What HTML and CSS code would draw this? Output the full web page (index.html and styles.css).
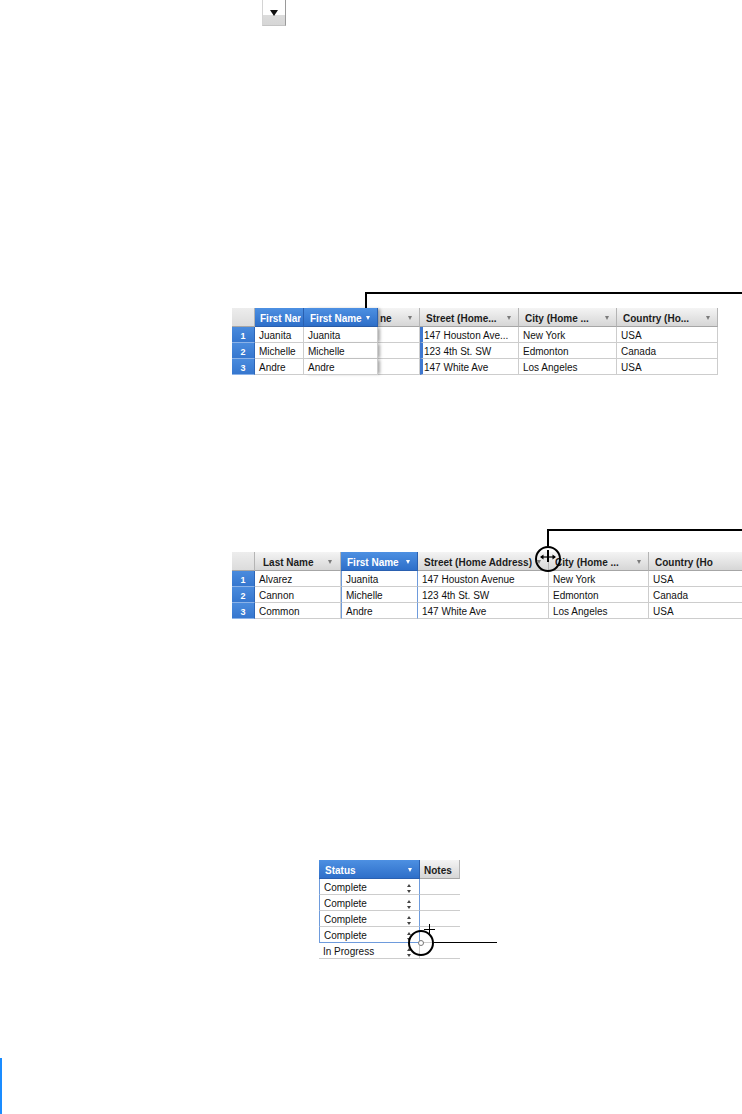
FILE: index.html
```html
<!DOCTYPE html>
<html lang="en">
<head>
    <meta charset="UTF-8">
    <meta name="viewport" content="width=device-width, initial-scale=1.0">
    <title>Reordering and resizing columns</title>
    <link rel="stylesheet" href="styles.css">
</head>
<body>
    <div class="page">
        <!-- Column menu button -->
        <div class="menu-btn"><i></i></div>

        <!-- Moving a column -->
        <div class="fig fig-move">
            <div class="callout callout-move"><span></span></div>
            <div class="sheet t1">
                <div class="h corner"></div>
                <div class="h sel clip"><span>First Nar</span></div>
                <div class="h sel ghost"><span>First Name</span><i class="dd"></i></div>
                <div class="h under"><span>ne</span><i class="dd"></i></div>
                <div class="h"><span>Street (Home...</span><i class="dd"></i></div>
                <div class="h"><span>City (Home ...</span><i class="dd"></i></div>
                <div class="h"><span>Country (Ho...</span><i class="dd"></i></div>

                <div class="c n">1</div>
                <div class="c">Juanita</div>
                <div class="c ghost">Juanita</div>
                <div class="c"></div>
                <div class="c drop">147 Houston Ave...</div>
                <div class="c">New York</div>
                <div class="c">USA</div>

                <div class="c n">2</div>
                <div class="c">Michelle</div>
                <div class="c ghost">Michelle</div>
                <div class="c"></div>
                <div class="c drop">123 4th St. SW</div>
                <div class="c">Edmonton</div>
                <div class="c">Canada</div>

                <div class="c n">3</div>
                <div class="c">Andre</div>
                <div class="c ghost">Andre</div>
                <div class="c"></div>
                <div class="c drop">147 White Ave</div>
                <div class="c">Los Angeles</div>
                <div class="c">USA</div>
            </div>
        </div>

        <!-- Resizing a column -->
        <div class="fig fig-resize">
            <div class="callout callout-resize"><span></span></div>
            <div class="sheet t2">
                <div class="h corner"></div>
                <div class="h wide"><span>Last Name</span><i class="dd"></i></div>
                <div class="h sel"><span>First Name</span><i class="dd"></i></div>
                <div class="h"><span>Street (Home Address)</span><i class="dd"></i></div>
                <div class="h"><span>City (Home ...</span><i class="dd"></i></div>
                <div class="h"><span>Country (Ho</span><i class="dd"></i></div>

                <div class="c n">1</div>
                <div class="c">Alvarez</div>
                <div class="c picked">Juanita</div>
                <div class="c">147 Houston Avenue</div>
                <div class="c">New York</div>
                <div class="c">USA</div>

                <div class="c n">2</div>
                <div class="c">Cannon</div>
                <div class="c picked">Michelle</div>
                <div class="c">123 4th St. SW</div>
                <div class="c">Edmonton</div>
                <div class="c">Canada</div>

                <div class="c n">3</div>
                <div class="c">Common</div>
                <div class="c picked">Andre</div>
                <div class="c">147 White Ave</div>
                <div class="c">Los Angeles</div>
                <div class="c">USA</div>
            </div>
            <div class="lens lens-resize">
                <svg width="26" height="26" viewBox="0 0 26 26">
                    <line x1="13" y1="4" x2="13" y2="16" stroke="#000" stroke-width="2"/>
                    <line x1="6" y1="11" x2="20" y2="11" stroke="#000" stroke-width="1.2"/>
                    <path d="M5 11 L8.5 8.5 L8.5 13.5 Z" fill="#000"/>
                    <path d="M21 11 L17.5 8.5 L17.5 13.5 Z" fill="#000"/>
                </svg>
            </div>
        </div>

        <!-- Filling cells -->
        <div class="fig fig-fill">
            <div class="sheet t3">
                <div class="h sel"><span>Status</span><i class="dd"></i></div>
                <div class="h notes"><span>Notes</span></div>

                <div class="c st picked"><span>Complete</span><i class="step"></i></div>
                <div class="c nt"></div>
                <div class="c st picked"><span>Complete</span><i class="step"></i></div>
                <div class="c nt"></div>
                <div class="c st picked"><span>Complete</span><i class="step"></i></div>
                <div class="c nt"></div>
                <div class="c st picked last"><span>Complete</span><i class="step"></i></div>
                <div class="c nt"></div>
                <div class="c st"><span>In Progress</span><i class="step"></i></div>
                <div class="c nt"></div>
            </div>
            <div class="cross"></div>
            <div class="lens lens-fill"><i class="handle"></i></div>
            <div class="pointer"></div>
        </div>

        <div class="edge-bar"></div>
    </div>
</body>
</html>
```

FILE: styles.css
```css
body {
    margin: 0;
    background: #fff;
    font-family: "Liberation Sans", Arial, sans-serif;
    font-size: 10px;
    color: #111;
}
.page {
    width: 742px;
    height: 1114px;
    overflow: hidden;
}
.menu-btn {
    margin-left: 262px;
    width: 24px;
    height: 26px;
    box-sizing: border-box;
    border-left: 1px solid #d4d4d4;
    border-right: 1px solid #9a9a9a;
    border-bottom: 1px solid #c4c4c4;
    background: linear-gradient(#fff 0, #fff 15px, #dcdcdc 15px, #d6d6d6 100%);
    display: flex;
    justify-content: center;
    padding-top: 10px;
}
.menu-btn i {
    width: 0;
    height: 0;
    border-left: 4px solid transparent;
    border-right: 4px solid transparent;
    border-top: 6px solid #111;
}
.fig {
    position: relative;
}
.fig-move {
    margin: 266px 0 0 232px;
    width: 510px;
}
.fig-resize {
    margin: 154px 0 0 232px;
    width: 510px;
    overflow: hidden;
}
.fig-fill {
    margin: 241px 0 0 319px;
    width: 200px;
}
.callout {
    display: flex;
}
.callout span {
    flex: 1;
    border-left: 2px solid #000;
    border-top: 2px solid #000;
}
.callout-move {
    height: 16px;
    padding-left: 133px;
}
.callout-resize {
    height: 17px;
    padding-left: 315px;
    margin-bottom: 6px;
}

/* spreadsheet grid */
.sheet {
    display: grid;
    grid-template-rows: 19px repeat(3, 16px);
}
.t1 {
    grid-template-columns: 23px 49px 74px 42px 99px 98px 101px;
}
.t2 {
    grid-template-columns: 23px 86px 77px 131px 100px 125px;
}
.t3 {
    grid-template-columns: 101px 40px;
    grid-template-rows: 19px repeat(5, 16px);
}
.h {
    display: flex;
    align-items: center;
    justify-content: space-between;
    box-sizing: border-box;
    padding: 2px 7px 0 6px;
    background: linear-gradient(#f4f4f4, #d6d6d6);
    border-right: 1px solid #b4b4b4;
    border-bottom: 1px solid #a6a6a6;
    font-weight: bold;
    color: #1c1c1c;
    overflow: hidden;
}
.h span {
    white-space: nowrap;
    overflow: hidden;
}
.h.corner {
    background: linear-gradient(#ededed, #dcdcdc);
}
.h.sel {
    background: linear-gradient(#4d90e2, #2e6fc9);
    border-right-color: #2a60b0;
    border-bottom-color: #2a60b0;
    color: #fff;
}
.h.clip {
    padding-left: 5px;
    padding-right: 0;
}
.h.under {
    padding-left: 2px;
}
.h.wide {
    padding-left: 8px;
    padding-right: 8px;
}
.h.notes {
    padding-left: 4px;
    padding-right: 0;
}
.dd {
    flex: none;
    width: 0;
    height: 0;
    margin-bottom: 1px;
    border-left: 2.5px solid transparent;
    border-right: 2.5px solid transparent;
    border-top: 4px solid #7a7a7a;
}
.h.sel .dd {
    border-top-color: #fff;
}
.c {
    box-sizing: border-box;
    padding: 3px 3px 0 4px;
    line-height: 12px;
    white-space: nowrap;
    overflow: hidden;
    border-right: 1px solid #cdcdcd;
    border-bottom: 1px solid #cdcdcd;
    background: #fff;
}
.c.n {
    padding: 3px 0 0;
    text-align: center;
    font-size: 9px;
    font-weight: bold;
    color: #fff;
    background: linear-gradient(#4a8bdd, #3677cf);
    border-right-color: #2d66b8;
    border-bottom-color: #8cb3e8;
}
.ghost {
    position: relative;
    z-index: 1;
    box-shadow: 3px 0 3px -1px rgba(0, 0, 0, 0.35);
}
.c.drop {
    border-left: 3px solid #3f78d0;
    padding-left: 1px;
}
.c.picked {
    border-left: 1px solid #6e9bdc;
    border-right: 1px solid #6e9bdc;
}
.c.picked.last {
    border-bottom: 1px solid #6e9bdc;
}
.c.st {
    display: flex;
    align-items: center;
    justify-content: space-between;
    padding-right: 7px;
}
.c.nt {
    border-right: none;
}
.step {
    position: relative;
    width: 5px;
    height: 9px;
}
.step::before,
.step::after {
    content: "";
    position: absolute;
    left: 0;
    width: 0;
    height: 0;
    border-left: 2.5px solid transparent;
    border-right: 2.5px solid transparent;
}
.step::before {
    top: 0;
    border-bottom: 3px solid #444;
}
.step::after {
    bottom: 0;
    border-top: 3px solid #444;
}

/* magnifier callouts */
.lens {
    position: absolute;
    width: 26px;
    height: 26px;
    box-sizing: border-box;
    border: 2px solid #000;
    border-radius: 50%;
}
.lens svg {
    position: absolute;
    left: -2px;
    top: -2px;
}
.lens-resize {
    left: 303px;
    top: 17px;
}
.lens-fill {
    left: 89px;
    top: 70px;
}
.handle {
    position: absolute;
    left: 8px;
    top: 8px;
    width: 6px;
    height: 6px;
    box-sizing: border-box;
    border: 1px solid #777;
    border-radius: 50%;
    background: #fff;
}
.pointer {
    position: absolute;
    left: 115px;
    top: 82px;
    width: 63px;
    height: 0;
    border-top: 1.5px solid #000;
}
.cross {
    position: absolute;
    left: 105px;
    top: 64px;
    width: 11px;
    height: 11px;
    background:
        linear-gradient(#000, #000) 5px 0 / 1px 11px no-repeat,
        linear-gradient(#000, #000) 0 5px / 11px 1px no-repeat;
}
.edge-bar {
    margin-top: 99px;
    width: 2px;
    height: 60px;
    background: #1a8cff;
}
```
